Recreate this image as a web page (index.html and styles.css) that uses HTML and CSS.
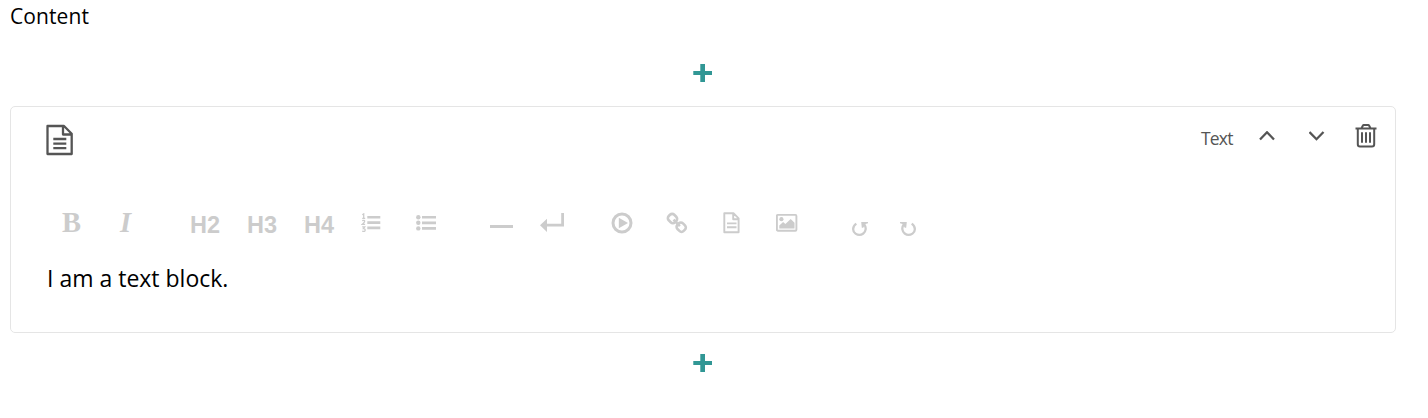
FILE: index.html
```html
<!DOCTYPE html>
<html lang="en">
<head>
<meta charset="utf-8">
<title>Content</title>
<link rel="stylesheet" href="styles.css">
</head>
<body>
<main class="editor">
  <div class="label"><span>Content</span></div>
  <div class="add add-top"><svg width="20" height="18" viewBox="0 0 20 18"><path d="M7.3 0h4.7v7h7v4h-7v7H7.3v-7H.3V7h7z"/></svg></div>
  <section class="block">
    <header class="head">
      <svg class="type" width="28" height="32" viewBox="0 0 28 32"><path d="M1.5 2H18L25.7 9.8V30H1.5zM17 2v8.5h8.7M7.3 15h13M7.3 19.6h13M7.3 24.2h13"/></svg>
      <div class="actions">
        <span class="name">Text</span>
        <svg class="up" width="16" height="10" viewBox="0 0 16 10"><path d="M1 8.5 8 1.3l7 7.2"/></svg>
        <svg class="down" width="16" height="10" viewBox="0 0 16 10"><path d="M.5 1 7.5 8.2l7-7.2"/></svg>
        <svg class="trash" width="22" height="24" viewBox="0 0 22 24"><path d="M.5 4.6h21M6.5 4.3l1.3-2.5c.2-.5.5-.7 1-.7h4.4c.5 0 .8.2 1 .7l1.3 2.5M2.8 5v15.3q0 2.2 2.2 2.2h12q2.2 0 2.2-2.2V5M7 8.3v10.4M11 8.3v10.4M15 8.3v10.4"/></svg>
      </div>
    </header>
    <div class="toolbar">
      <div class="group styles"><span class="serif bold">B</span><span class="serif italic">I</span></div>
      <div class="group headings"><span>H2</span><span>H3</span><span>H4</span>
        <svg width="20" height="20" viewBox="0 0 20 20"><path d="M6.3 3h13v2.6h-13zM6.3 8.3h13v2.6h-13zM6.3 13.6h13v2.6h-13z"/><path class="thin" d="M1.3 1.8 2.7.9v4.4M1.2 5.3h3M1.2 7.7q2.5-1 2.5.5 0 1-2.5 3.2h2.9M1.2 13.9h2.5l-1.3 1.7q1.8 0 1.8 1.4 0 2-3 1.2"/></svg>
        <svg class="bullets" width="20" height="20" viewBox="0 0 20 20"><circle cx="2.3" cy="4.2" r="2.2"/><circle cx="2.3" cy="9.8" r="2.2"/><circle cx="2.3" cy="15.4" r="2.2"/><path d="M6 2.9h14v2.7H6zM6 8.5h14v2.7H6zM6 14.1h14v2.7H6z"/></svg>
      </div>
      <div class="group breaks">
        <svg width="23" height="20" viewBox="0 0 23 20"><path d="M0 12h23v3H0z"/></svg>
        <svg width="24" height="20" viewBox="0 0 24 20"><path d="M21.2 0H24v13.4H7V19L0 12.3 7 5.7v5.1h14.2z"/></svg>
      </div>
      <div class="group media">
        <svg width="22" height="22" viewBox="0 0 22 22"><circle class="ring" cx="11" cy="11" r="9"/><path d="M7.8 5.7 17 11l-9.2 5.3z"/></svg>
        <svg width="22" height="22" viewBox="0 0 22 22"><g class="link"><rect x="2.1" y="2.6" width="8.8" height="7.8" rx="3" transform="rotate(45 6.5 6.5)"/><rect x="10.8" y="11.3" width="8.8" height="7.8" rx="3" transform="rotate(45 15.2 15.2)"/><path d="m7.5 7.7 6.4 6.4"/></g></svg>
        <svg width="22" height="22" viewBox="0 0 22 22"><path class="file" d="M3.3 1.3h9.4l4.9 5v14H3.3zM12.2 1.5v5.7h5.3M6 11.4h9.5M6 15.3h9.5"/></svg>
        <svg width="22" height="22" viewBox="0 0 22 22"><rect class="frame" x=".9" y="2.9" width="19.5" height="15.8" rx="1"/><circle cx="5.4" cy="7.2" r="2.1"/><path d="M3.3 16.4v-3l3.8-3.4 2.3 2.1L14.7 7l3.8 3.8v5.6z"/></svg>
      </div>
      <div class="group history">
        <svg width="16" height="15" viewBox="0 0 16 15"><path class="arc" d="M4.3 1.6C.2 4.4.3 9.5 3.5 11.6c2.4 1.6 5.8 1.4 7.8-.1 2.5-1.8 3.4-6 .9-9"/><path d="M9.2 0H16v1.2l-2.5.8-2.3 3.8H9.8z"/></svg>
        <svg width="16" height="15" viewBox="0 0 16 15"><path class="arc" d="M11.7 1.6c4.1 2.8 4 7.9.8 10-2.4 1.6-5.8 1.4-7.8-.1-2.5-1.8-3.4-6-.9-9"/><path d="M6.8 0H0v1.2l2.5.8 2.3 3.8h1.4z"/></svg>
      </div>
    </div>
    <p class="body-text"><span>I am a text block.</span></p>
  </section>
  <div class="add add-bottom"><svg width="20" height="18" viewBox="0 0 20 18"><path d="M7.3 0h4.7v7h7v4h-7v7H7.3v-7H.3V7h7z"/></svg></div>
</main>
</body>
</html>
```
FILE: styles.css
```css
* { box-sizing: border-box; }
body { margin: 0; background: #fff; color: #000; font-family: "Open Sans", "Noto Sans", sans-serif; }
svg { display: block; flex: none; }
.editor { width: 1396px; height: 418px; padding-left: 10px; }
.label { height: 64px; font-size: 21px; line-height: 32px; letter-spacing: .1px; }
.add { display: flex; justify-content: center; fill: #319795; }
.add svg { margin-right: 1px; }
.add-top { height: 42px; }
.add-bottom { padding-top: 21px; }
.block { height: 227px; border: 1px solid #e5e5e5; border-radius: 5px; }
.head { display: flex; justify-content: space-between; height: 104px; padding: 17px 18px 0 35px; fill: none; stroke: #555; stroke-width: 2; }
.type { stroke-width: 2.3; stroke-linejoin: round; }
.actions { display: flex; align-items: flex-start; }
.name { width: 58px; color: #555; font-size: 17.5px; line-height: 28px; letter-spacing: -.8px; }
.up, .down { margin-top: 7px; stroke-width: 2.3; }
.up { margin-right: 34px; }
.down { margin-right: 30px; }
.toolbar { display: flex; height: 40px; padding-left: 51px; color: #ccc; fill: #ccc; }
.group { display: flex; height: 24px; align-items: center; }
.serif { font: bold 28.5px/24px "Liberation Serif", serif; }
.bold { width: 20px; }
.italic { width: 14px; font-style: italic; }
.styles { gap: 38px; width: 128px; }
.headings { gap: 26px; width: 300px; }
.headings span { width: 31px; font: bold 23.5px/24px "Liberation Sans", sans-serif; padding-top: 4px; }
.bullets { margin-left: 9px; }
.breaks { gap: 27px; width: 121px; }
.media { gap: 33px; width: 241px; }
.history { gap: 32px; padding-top: 12px; }
.thin { fill: none; stroke: #ccc; stroke-width: 1.3; }
.ring, .link { fill: none; stroke: #ccc; stroke-width: 3; }
.link { stroke-width: 2.6; }
.file, .frame { fill: none; stroke: #ccc; stroke-width: 1.9; stroke-linejoin: round; }
.arc { fill: none; stroke: #ccc; stroke-width: 2.3; }
.body-text { margin: 0 0 0 36px; font-size: 23px; line-height: 34px; padding-top: 10px; }
```
